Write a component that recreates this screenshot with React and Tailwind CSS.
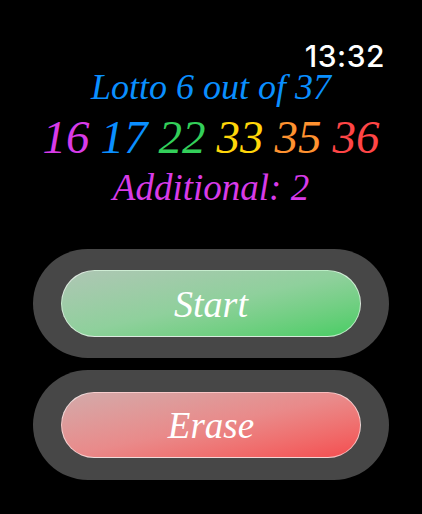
export default function App() {
  const numbers = [
    { n: 16, c: "text-[#d83be8]" },
    { n: 17, c: "text-[#0a8fff]" },
    { n: 22, c: "text-[#33cf5a]" },
    { n: 33, c: "text-[#ffd60a]" },
    { n: 35, c: "text-[#ff9230]" },
    { n: 36, c: "text-[#ff4546]" },
  ];
  const serif = "font-['Liberation_Serif',serif] italic";
  return (
    <div className="w-[422px] h-[514px] bg-black flex flex-col overflow-hidden">
      <div className="pt-[41px] pr-[37px] flex justify-end">
        <span className="font-['Inter',sans-serif] font-medium text-[30px] leading-none text-white tracking-[0.5px]">
          13:32
        </span>
      </div>
      <div className={`${serif} text-[36px] leading-none text-[#0a8fff] text-center -mt-[2px]`}>
        Lotto 6 out of 37
      </div>
      <div className={`${serif} text-[47px] leading-none mt-[9px] flex justify-center gap-[11px]`}>
        {numbers.map((x) => (
          <span key={x.n} className={x.c}>
            {x.n}
          </span>
        ))}
      </div>
      <div className={`${serif} text-[37px] leading-none text-[#d83be8] text-center mt-[8px]`}>
        Additional: 2
      </div>
      <div className="mt-[43px] mx-[33px] h-[109px] rounded-full bg-[#474747] px-[28px] py-[21px]">
        <button className="w-full h-full rounded-full border border-white/60 bg-gradient-to-br from-[#aec6b4] via-[#8fd09c] to-[#45cd63] flex items-center justify-center">
          <span className={`${serif} text-[38px] leading-none text-white`}>Start</span>
        </button>
      </div>
      <div className="mt-[12px] mx-[33px] h-[110px] rounded-full bg-[#474747] px-[28px] py-[22px]">
        <button className="w-full h-full rounded-full border border-white/60 bg-gradient-to-br from-[#d2aaaa] via-[#e98a8a] to-[#f44b4f] flex items-center justify-center">
          <span className={`${serif} text-[37px] leading-none text-white`}>Erase</span>
        </button>
      </div>
    </div>
  );
}
